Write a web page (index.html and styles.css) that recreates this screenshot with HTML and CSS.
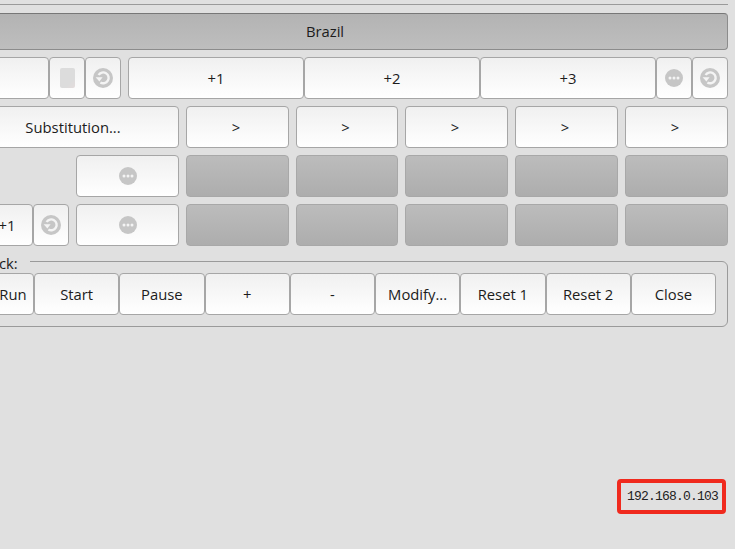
FILE: index.html
```html
<!DOCTYPE html>
<html lang="en">
<head>
  <meta charset="UTF-8" />
  <title>Scoreboard Control</title>
  <link rel="stylesheet" href="styles.css">
</head>
<body>
  <svg class="icon-defs" width="0" height="0">
    <symbol id="ico-reset" viewBox="0 0 20 20">
      <circle cx="10" cy="10" r="10" fill="#c6c6c6"/>
      <path d="M7.4 14.4A5.4 5.4 0 1 0 5.6 7" fill="none" stroke="#f4f4f4" stroke-width="2.4"/>
      <path d="M2.6 9.2L9.6 9.2L6.4 13.6Z" fill="#f4f4f4"/>
    </symbol>
    <symbol id="ico-more" viewBox="0 0 18 18">
      <circle cx="9" cy="9" r="9" fill="#c6c6c6"/>
      <circle cx="5" cy="9" r="1.5" fill="#f4f4f4"/>
      <circle cx="9" cy="9" r="1.5" fill="#f4f4f4"/>
      <circle cx="13" cy="9" r="1.5" fill="#f4f4f4"/>
    </symbol>
  </svg>

  <div class="panel">
    <div class="top-line"></div>
    <div class="team-bar">Brazil</div>

    <div class="row-score">
      <div class="score-left">
        <button class="btn grow"></button>
        <button class="btn square"><span class="stop-ico"></span></button>
        <button class="btn square"><svg class="ico-20"><use href="#ico-reset"/></svg></button>
      </div>
      <div class="score-right">
        <button class="btn grow">+1</button>
        <button class="btn grow">+2</button>
        <button class="btn grow">+3</button>
        <button class="btn square"><svg class="ico-18"><use href="#ico-more"/></svg></button>
        <button class="btn square"><svg class="ico-20"><use href="#ico-reset"/></svg></button>
      </div>
    </div>

    <div class="grid">
      <button class="btn span-2">Substitution...</button>
      <button class="btn step">&gt;</button>
      <button class="btn step">&gt;</button>
      <button class="btn step">&gt;</button>
      <button class="btn step">&gt;</button>
      <button class="btn step">&gt;</button>

      <div></div>
      <button class="btn"><svg class="ico-18"><use href="#ico-more"/></svg></button>
      <div class="btn slot"></div>
      <div class="btn slot"></div>
      <div class="btn slot"></div>
      <div class="btn slot"></div>
      <div class="btn slot"></div>

      <div class="cell-plus">
        <button class="btn grow">+1</button>
        <button class="btn square"><svg class="ico-20"><use href="#ico-reset"/></svg></button>
      </div>
      <button class="btn"><svg class="ico-18"><use href="#ico-more"/></svg></button>
      <div class="btn slot"></div>
      <div class="btn slot"></div>
      <div class="btn slot"></div>
      <div class="btn slot"></div>
      <div class="btn slot"></div>
    </div>

    <fieldset class="clock">
      <legend>Clock:</legend>
      <div class="clock-row">
        <button class="btn run">Run</button>
        <button class="btn">Start</button>
        <button class="btn">Pause</button>
        <button class="btn">+</button>
        <button class="btn">-</button>
        <button class="btn">Modify...</button>
        <button class="btn">Reset 1</button>
        <button class="btn">Reset 2</button>
        <button class="btn">Close</button>
      </div>
    </fieldset>
  </div>

  <div class="ip-badge">192.168.0.103</div>
</body>
</html>
```

FILE: styles.css
```css
html, body { height: 100%; }
body {
  margin: 0;
  background: #e0e0e0;
  overflow: hidden;
  position: relative;
  font-family: "Open Sans", "Noto Sans", sans-serif;
  font-size: 14.8px;
  color: #1c1c1c;
}
.icon-defs { position: absolute; }

/* the window is scrolled sideways, so the panel starts left of the picture */
.panel {
  width: 806px;
  margin-left: -78px;
  padding-top: 4px;
}
.top-line { height: 1px; background: #9a9a9a; margin-bottom: 8px; }
.team-bar {
  height: 35px;
  line-height: 35px;
  text-align: center;
  border: 1px solid #8c8c8c;
  border-top-color: #777;
  border-radius: 4px;
  background: linear-gradient(#b3b3b3, #bebebe);
}

.btn {
  display: flex;
  align-items: center;
  justify-content: center;
  height: 42px;
  padding: 0;
  box-sizing: border-box;
  border: 1px solid #a6a6a6;
  border-radius: 4px;
  background: linear-gradient(#f0f0f0, #fff);
  font: inherit;
  color: inherit;
}
.grow { flex: 1; }
.square { width: 36px; flex: none; }
.step { padding-right: 3px; }
.slot {
  background: linear-gradient(#bcbcbc, #adadad);
  border-color: #a8a8a8;
}

.row-score { display: flex; gap: 7px; margin-top: 7px; }
.score-left { display: flex; flex: 1; }
.score-right { display: flex; width: 600px; }

.grid {
  display: grid;
  grid-template-columns: 102px 103px 103px 102px 103px 103px 103px;
  gap: 7px;
  margin: 7px 0 0 45px;
}
.span-2 { grid-column: span 2; }
.cell-plus { display: flex; margin-left: 14px; }

.clock {
  margin: 4px 0 0;
  padding: 0 11px 11px 0;
  border: 1px solid #9a9a9a;
  border-radius: 6px;
}
.clock legend { margin-left: 48px; padding: 4px 12px 0 6px; line-height: 19px; }
.clock-row { display: flex; justify-content: flex-end; }
.clock-row .btn { width: 85.25px; }
.clock-row .run { width: 42px; }

.ico-20 { width: 20px; height: 20px; }
.ico-18 { width: 18px; height: 18px; }
.stop-ico {
  width: 15px;
  height: 20px;
  border-radius: 2px;
  background: linear-gradient(135deg, #dcdcdc 70%, #e4dcdc);
}

.ip-badge {
  position: absolute;
  left: 617px;
  top: 479px;
  width: 109px;
  height: 35px;
  box-sizing: border-box;
  border: 4px solid #f02a1e;
  border-radius: 4px;
  padding-left: 2px;
  line-height: 27px;
  text-align: center;
  font-family: "Liberation Mono", monospace;
  font-size: 13px;
  letter-spacing: -0.8px;
  color: #222;
}
```
